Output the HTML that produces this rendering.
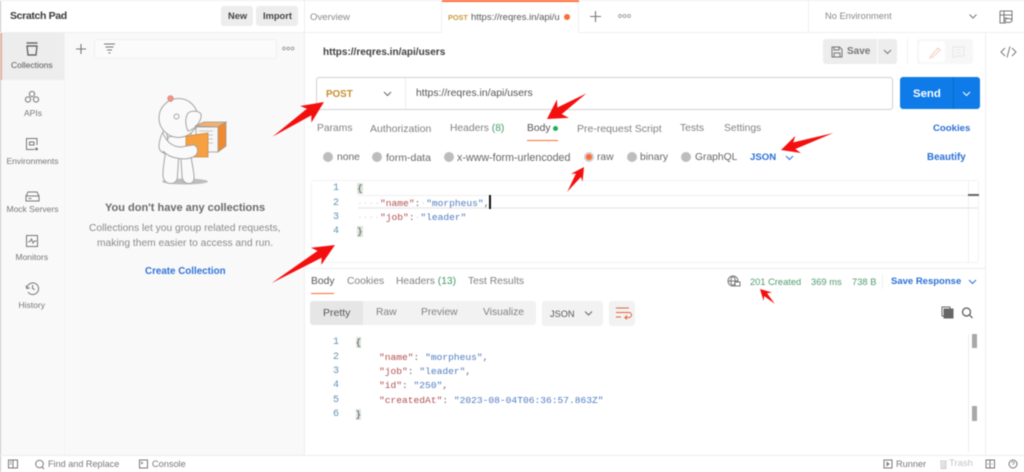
<!DOCTYPE html>
<html><head><meta charset="utf-8">
<style>
html,body{margin:0;padding:0;background:#fff}
#p{position:relative;width:1024px;height:472px;overflow:hidden;background:#fff;font-family:"Liberation Sans",sans-serif;color:#6b6b6b;filter:blur(.4px)}
.t{position:absolute;white-space:nowrap;line-height:14px;font-size:10.3px;margin-top:.8px}
.b{position:absolute}
.m{font-family:"Liberation Mono",monospace;font-size:9.6px;white-space:pre;position:absolute;line-height:14px;margin-top:.8px}
.blue{color:#2a6fd6;font-weight:bold}
.k{color:#b0504f}.s{color:#4f7cc0}.n{color:#5e93b5;text-align:right;width:20px;font-size:10px}
.br{background:#dde5dd;color:#555}
.r{position:absolute;width:10px;height:10px;border-radius:50%;background:#bdbdbd}
.nav{font-size:8.5px;color:#777;margin-top:0}
.z{margin-top:0}
svg{position:absolute;left:0;top:0}
</style></head><body><div id="p">
<!-- sidebar backgrounds -->
<div class="b" style="left:1px;top:32px;width:303px;height:423px;background:#f9f9f9"></div>
<div class="b" style="left:64px;top:32px;width:1px;height:423px;background:#f2f2f2"></div>
<div class="b" style="left:1px;top:32px;width:63px;height:48px;background:#ededed"></div>
<div class="b" style="left:1px;top:32px;width:1px;height:48px;background:#f0a080"></div>
<div class="b" style="left:0;top:0;width:1px;height:472px;background:#c4c4c4"></div>
<div class="b" style="left:0;top:0;width:1024px;height:1px;background:#f0f0f0"></div>
<div class="b" style="left:0;top:32px;width:1024px;height:1px;background:#f0f0f0"></div>
<div class="b" style="left:0;top:455px;width:1024px;height:1px;background:#ededed"></div>
<div class="b" style="left:304px;top:0;width:1px;height:455px;background:#eeeeee"></div>
<div class="b" style="left:985px;top:32px;width:1px;height:423px;background:#eeeeee"></div>
<div class="b" style="left:808px;top:0;width:1px;height:32px;background:#f0f0f0"></div>

<!-- sidebar top -->
<div class="t z" style="left:10px;top:9px;font-size:10.5px;letter-spacing:-.35px;font-weight:bold;color:#3a3a3a">Scratch Pad</div>
<div class="b" style="left:221px;top:6px;width:32px;height:20px;background:#ededed;border-radius:3px"></div>
<div class="b" style="left:256px;top:6px;width:42px;height:20px;background:#ededed;border-radius:3px"></div>
<div class="t z" style="left:228px;top:9px;font-size:9.300px;font-weight:bold;color:#444">New</div>
<div class="t z" style="left:263px;top:9px;font-size:9.300px;font-weight:bold;color:#444">Import</div>
<div class="b" style="left:94px;top:39px;width:181px;height:18px;background:#fbfbfb;border:1px solid #f0f0f0;border-radius:3px"></div>

<div class="t nav" style="left:11px;top:58px;color:#555">Collections</div>
<div class="t nav" style="left:24px;top:106px">APIs</div>
<div class="t nav" style="left:6.500px;top:154px">Environments</div>
<div class="t nav" style="left:6.500px;top:202px">Mock Servers</div>
<div class="t nav" style="left:15.500px;top:250px">Monitors</div>
<div class="t nav" style="left:18.500px;top:298px">History</div>

<div class="t" style="left:105px;top:200px;font-size:11px;font-weight:bold;color:#6b6b6b">You don't have any collections</div>
<div class="t" style="left:89px;top:221px;font-size:10.250px;color:#8a8a8a">Collections let you group related requests,</div>
<div class="t" style="left:97px;top:236px;font-size:10.250px;color:#8a8a8a">making them easier to access and run.</div>
<div class="t blue" style="left:145px;top:264px;font-size:9.800px;color:#2f73d8">Create Collection</div>

<!-- tabs -->
<div class="b" style="left:441px;top:0;width:138px;height:33px;background:#fff;border-left:1px solid #f0f0f0;border-right:1px solid #f0f0f0;box-sizing:border-box"></div>
<div class="b" style="left:442px;top:0;width:137px;height:2px;background:#ff6c37"></div>
<div class="t" style="left:310px;top:10px;font-size:9.600px;color:#8a8a8a">Overview</div>
<div class="t" style="left:448px;top:10px;font-size:7.300px;font-weight:bold;color:#c79a3c">POST</div>
<div class="b" style="left:471px;top:10px;width:89px;height:15px;overflow:hidden"><div class="t" style="left:0;top:0;color:#555;font-size:9.500px">https://reqres.in/api/users</div></div>
<div class="b" style="left:564px;top:14px;width:6px;height:6px;border-radius:50%;background:#ff6c37"></div>
<div class="t z" style="left:825px;top:9px;color:#888;font-size:9.300px">No Environment</div>

<!-- URL title -->
<div class="t" style="left:323px;top:45px;font-size:10px;font-weight:bold;color:#3f3f3f">https://reqres.in/api/users</div>

<!-- save -->
<div class="b" style="left:823px;top:39px;width:54px;height:25px;background:#ededed;border-radius:3px 0 0 3px"></div>
<div class="b" style="left:878px;top:39px;width:19px;height:25px;background:#ededed;border-radius:0 3px 3px 0"></div>
<div class="t z" style="left:847px;top:44.500px;font-size:10px;font-weight:bold;color:#777">Save</div>
<div class="b" style="left:907px;top:39px;width:1px;height:25px;background:#f0f0f0"></div>
<div class="b" style="left:917px;top:39px;width:56px;height:25px;background:#f7f7f7;border-radius:3px"></div>
<div class="b" style="left:919px;top:41px;width:26px;height:21px;background:#fff;border-radius:3px"></div>

<!-- URL bar -->
<div class="b" style="left:316px;top:77px;width:577px;height:33px;box-sizing:border-box;border:1px solid #d0d0d0;border-radius:3px;background:#fff"></div>
<div class="b" style="left:405px;top:78px;width:1px;height:31px;background:#ededed"></div>
<div class="t" style="left:326px;top:87px;font-size:9.800px;font-weight:bold;color:#c58f2e">POST</div>
<div class="t" style="left:416px;top:86px;font-size:10.400px;color:#555">https://reqres.in/api/users</div>
<div class="b" style="left:900px;top:77px;width:80px;height:32px;background:#0f7be8;border-radius:3px"></div>
<div class="b" style="left:953px;top:77px;width:1px;height:32px;background:#0b6ccd"></div>
<div class="t" style="left:913px;top:86px;font-size:11.400px;font-weight:bold;color:#fff">Send</div>

<!-- request tabs -->
<div class="t" style="left:317px;top:121px;color:#808080">Params</div>
<div class="t" style="left:370px;top:121px;color:#808080;font-size:10.500px">Authorization</div>
<div class="t" style="left:450px;top:121px;color:#808080">Headers <span style="color:#3f9a66">(8)</span></div>
<div class="t" style="left:527px;top:121px;color:#555">Body</div>
<div class="b" style="left:553px;top:126px;width:5px;height:5px;border-radius:50%;background:#1fae58"></div>
<div class="b" style="left:527px;top:140px;width:31px;height:1px;background:#ff6c37"></div>
<div class="t" style="left:577px;top:121px;color:#808080;font-size:10.500px">Pre-request Script</div>
<div class="t" style="left:680px;top:121px;color:#808080">Tests</div>
<div class="t" style="left:724px;top:121px;color:#808080">Settings</div>
<div class="t blue" style="left:933px;top:121px;font-size:9.600px">Cookies</div>

<!-- body types -->
<div class="r" style="left:323px;top:152px"></div><div class="t" style="left:337px;top:150px;color:#666">none</div>
<div class="r" style="left:372px;top:152px"></div><div class="t" style="left:386px;top:150px;color:#666;font-size:10.500px">form-data</div>
<div class="r" style="left:444px;top:152px"></div><div class="t" style="left:457px;top:150px;color:#666;font-size:10.700px">x-www-form-urlencoded</div>
<div class="r" style="left:584px;top:152px;background:#ff6c37;box-sizing:border-box;border:2px solid #cfcfcf"></div><div class="t" style="left:597px;top:150px;color:#666">raw</div>
<div class="r" style="left:627px;top:152px"></div><div class="t" style="left:640px;top:150px;color:#666">binary</div>
<div class="r" style="left:681px;top:152px"></div><div class="t" style="left:695px;top:150px;color:#666">GraphQL</div>
<div class="t blue" style="left:750px;top:150px;font-size:9.600px">JSON</div>
<div class="t blue" style="left:927px;top:150px;font-size:9.800px">Beautify</div>

<!-- editor -->
<div class="b" style="left:311px;top:180px;width:668px;height:83px;box-sizing:border-box;border:1px solid #f3f3f3;border-radius:3px"></div>
<div class="b" style="left:358px;top:195px;width:621px;height:14px;box-sizing:border-box;border-top:1px solid #eeeeee;border-bottom:2px solid #eeeeee"></div>
<div class="b" style="left:968px;top:181px;width:1px;height:82px;background:#efefef"></div>
<div class="b" style="left:968px;top:194px;width:11px;height:2px;background:#666"></div>
<div class="m n" style="left:319px;top:181.500px">1</div>
<div class="m n" style="left:319px;top:196px">2</div>
<div class="m n" style="left:319px;top:210.300px">3</div>
<div class="m n" style="left:319px;top:224.700px">4</div>
<div class="m" style="left:357px;top:181.500px"><span class="br">{</span></div>
<div class="m" style="left:357px;top:196px"><span style="color:#ddd">····</span><span class="k">"name"</span>:<span style="color:#ddd">·</span><span class="s">"morpheus"</span>,</div>
<div class="m" style="left:357px;top:210.300px"><span style="color:#ddd">····</span><span class="k">"job"</span>:<span style="color:#ddd">·</span><span class="s">"leader"</span></div>
<div class="m" style="left:357px;top:224.700px"><span class="br">}</span></div>
<div class="b" style="left:489px;top:195px;width:1.500px;height:14px;background:#111"></div>

<!-- response -->
<div class="b" style="left:304px;top:268px;width:681px;height:1px;background:#ededed"></div>
<div class="t" style="left:311px;top:274.500px;color:#555">Body</div>
<div class="b" style="left:311px;top:293px;width:23px;height:1px;background:#ff6c37"></div>
<div class="t" style="left:347px;top:274.500px;color:#808080">Cookies</div>
<div class="t" style="left:396px;top:274.500px;color:#808080">Headers <span style="color:#3f9a66">(13)</span></div>
<div class="t" style="left:468px;top:274.500px;color:#808080">Test Results</div>
<div class="t z" style="left:750px;top:274.500px;font-size:9.300px;color:#4f9b6e">201 Created</div>
<div class="t z" style="left:811px;top:274.500px;font-size:9.400px;color:#4f9b6e">369 ms</div>
<div class="t z" style="left:852px;top:274.500px;font-size:9.400px;color:#4f9b6e">738 B</div>
<div class="b" style="left:882px;top:274px;width:1px;height:15px;background:#f0f0f0"></div>
<div class="t blue" style="left:891px;top:274.500px;font-size:9.500px">Save Response</div>

<div class="b" style="left:310px;top:301px;width:226px;height:24px;background:#f2f2f2;border-radius:3px"></div>
<div class="b" style="left:310px;top:301px;width:53px;height:24px;background:#e6e6e6;border-radius:3px 0 0 3px"></div>
<div class="t" style="left:323px;top:305.500px;color:#555;font-size:10.500px">Pretty</div>
<div class="t" style="left:376px;top:305.500px;color:#808080">Raw</div>
<div class="t" style="left:421px;top:305.500px;color:#808080">Preview</div>
<div class="t" style="left:483px;top:305.500px;color:#808080">Visualize</div>
<div class="b" style="left:542px;top:301px;width:61px;height:25px;background:#f2f2f2;border-radius:3px"></div>
<div class="t z" style="left:550px;top:306.500px;color:#555;font-size:9.200px">JSON</div>
<div class="b" style="left:609px;top:301px;width:26px;height:25px;background:#f2f2f2;border-radius:3px"></div>

<div class="m n" style="left:319px;top:335.500px">1</div>
<div class="m n" style="left:319px;top:349.800px">2</div>
<div class="m n" style="left:319px;top:364.200px">3</div>
<div class="m n" style="left:319px;top:378.500px">4</div>
<div class="m n" style="left:319px;top:392.800px">5</div>
<div class="m n" style="left:319px;top:407.100px">6</div>
<div class="m" style="left:355.500px;top:335.500px"><span class="br">{</span></div>
<div class="m" style="left:379px;top:349.800px"><span class="k">"name"</span>: <span class="s">"morpheus"</span>,</div>
<div class="m" style="left:379px;top:364.200px"><span class="k">"job"</span>: <span class="s">"leader"</span>,</div>
<div class="m" style="left:379px;top:378.500px"><span class="k">"id"</span>: <span class="s">"250"</span>,</div>
<div class="m" style="left:379px;top:392.800px"><span class="k">"createdAt"</span>: <span class="s">"2023-08-04T06:36:57.863Z"</span></div>
<div class="m" style="left:355.500px;top:407.100px"><span class="br">}</span></div>
<div class="b" style="left:968px;top:334px;width:1px;height:118px;background:#ededed"></div>
<div class="b" style="left:972px;top:334px;width:5px;height:14px;background:#a8a8a8"></div>
<div class="b" style="left:972px;top:406px;width:5px;height:15px;background:#a8a8a8"></div>

<!-- status -->
<div class="t z" style="left:48px;top:457px;font-size:9.100px;color:#777">Find and Replace</div>
<div class="t z" style="left:152px;top:457px;font-size:9.200px;color:#777">Console</div>
<div class="t z" style="left:896px;top:457px;font-size:9.200px;color:#777">Runner</div>
<div class="t z" style="left:949px;top:457px;font-size:9.500px;color:#c4c4c4">Trash</div>

<!-- icons, illustration, arrows -->
<svg width="1024" height="472" viewBox="0 0 1024 472" fill="none" stroke="#777" stroke-width="1">
 <!-- collections -->
 <path d="M26.500 43h11M27 46h10l-1 9h-8z" stroke="#555" stroke-width="1.200"/>
 <!-- apis -->
 <circle cx="32" cy="94" r="2.600"/><circle cx="28" cy="99.500" r="2.600"/><circle cx="36" cy="99.500" r="2.600"/>
 <!-- env -->
 <path d="M37 145v-6.500h-10.500v11h8"/><rect x="29.500" y="142" width="4.500" height="3"/><circle cx="36.500" cy="149" r=".9" fill="#777"/>
 <!-- mock -->
 <path d="M26 196l2-4h9l2 4v5h-13zM26 196h13M28.500 198.500h3"/>
 <!-- monitors -->
 <rect x="26.500" y="235.500" width="11" height="11"/><path d="M28 242l2-.5 1.500-2.500 1.500 4 1.500-2h2"/>
 <!-- history -->
 <path d="M27 288a5.800 5.800 0 1 1 1 4M26 285.500l.8 3 3-.6M32.500 285v3.500l2.300 1.200"/>
 <!-- plus / filter / dots -->
 <path d="M81 44v10M76 49h10" stroke-width="1.100"/>
 <path d="M104 44h11M105.500 47h8M107 50h5M108.500 53h2" stroke-width=".9"/>
 <g stroke-width=".7" stroke="#888"><circle cx="284" cy="48.500" r="1.400"/><circle cx="288.300" cy="48.500" r="1.400"/><circle cx="292.600" cy="48.500" r="1.400"/></g>
 <!-- tab plus, dots, env chevron, eye icon -->
 <path d="M595.500 11v11M590 16.500h11" stroke-width="1.100"/>
 <g stroke-width=".7" stroke="#888"><circle cx="620" cy="16" r="1.500"/><circle cx="624.500" cy="16" r="1.500"/><circle cx="629" cy="16" r="1.500"/></g>
 <path d="M969.500 14.500l3.500 3.500 3.500-3.500"/>
 <path d="M1000 11h12v9M1000 11v12h6M1000 15h12M1004 11v12M1004 18h3"/><ellipse cx="1008.500" cy="20.500" rx="3.500" ry="2"/>
 <!-- code icon -->
 <path d="M1005 48l-4 4 4 4M1012 48l4 4-4 4M1010 46.500l-3 11"/>
 <!-- save -->
 <path d="M832 47h7.500l2.500 2.500v7.500h-10zM834 47v3h5v-3M834 57v-4h6v4"/>
 <path d="M884 50l3.500 3.500 3.500-3.500"/>
 <path d="M931 56l7-8 2 2-7 7-3 1z" stroke="#f7cdbd"/>
 <path d="M953 47h11v9h-8l-3 2zM956 50h5M956 53h5" stroke="#e8e8e8"/>
 <!-- url chevrons -->
 <path d="M384 92l3.500 3.500 3.500-3.500" stroke="#666"/>
 <path d="M963 92l3.500 3.500 3.500-3.500" stroke="#fff"/>
 <path d="M786 156l3.500 3.500 3.500-3.500" stroke="#2a6fd6"/>
 <path d="M969 280l3.500 3.500 3.500-3.500" stroke="#2a6fd6"/>
 <path d="M585 311.500l3.500 3.500 3.500-3.500" stroke="#666"/>
 <!-- wrap -->
 <path d="M616 308h13M616 312.500h13a2 2 0 0 1 0 5h-4l2-2M625 317.500l2 2M616 317h5" stroke="#e0643c"/>
 <!-- globe -->
 <circle cx="733" cy="281" r="5" stroke="#777"/><path d="M728 281h10M733 276c-3 3-3 7 0 10M733 276c3 3 3 7 0 10"/>
 <rect x="735" y="282" width="5" height="4" fill="#fff"/>
 <!-- copy, search -->
 <rect x="942" y="307" width="8" height="9" stroke="#666"/><rect x="944" y="309" width="9" height="9" fill="#666" stroke="#666"/>
 <circle cx="966.500" cy="312" r="4" stroke="#555" stroke-width="1.200"/><path d="M969.500 315l3 3" stroke="#555" stroke-width="1.200"/>
 <!-- status bar -->
 <rect x="8.500" y="460" width="9" height="8"/><path d="M13 460v8M10 462h1.500M10 464h1.500"/>
 <circle cx="39.500" cy="464" r="3.800"/><path d="M42 467l2 2"/>
 <rect x="139.500" y="460" width="8" height="8"/><path d="M141 462l1.500 1-1.500 1"/>
 <rect x="884" y="460" width="8" height="8"/><path d="M887 462.500l2 1.500-2 1.500z"/>
 <path d="M940 461h7M941 461.500v7h5v-7M942.800 462v6M944.500 462v6" stroke="#ccc"/>
 <rect x="986" y="460" width="8.500" height="8"/><path d="M990 460v8M987.500 464h1M991.500 464h1"/>
 <circle cx="1013" cy="464" r="4"/><path d="M1011.800 463c0-2 2.600-1.800 2.400 0-.1 1-1.200 1-1.200 2" stroke-width=".7"/>

 <!-- illustration -->
 <ellipse cx="185" cy="181.500" rx="23" ry="3" fill="#bdbdbd" stroke="none"/>
 <g stroke="#a5a5a5" stroke-width="1" fill="#fafafa">
  <path d="M166 127c-4 5-7 13-7 20 0 3 3 6 7 7l5-2-3-10z"/>
  <path d="M168 137c-1 12-5 24-5 38 0 6 4 8.500 7.500 8.500 4 0 7-2.500 7-8l1-16c.5-2 2-2 2.500 0l1 16c0 5 3 8 7 8 4 0 5.500-3 5-8-1-10-4-20-4-30 0-5 2-8 1-12z"/>
  <circle cx="178.500" cy="118" r="19.500"/>
  <path d="M188 113c5-3 11-2 13 1 1 6-5 15-13 17-3-6-3-13 0-18z"/>
  <circle cx="176.500" cy="116.500" r="2.500"/>
  <path d="M171 102l-1-3" />
 </g>
 <circle cx="170.500" cy="98.500" r="2.700" fill="#f4967a" stroke="#d88"/>
 <path d="M195 126l9-4h22l-8 5z" fill="#f5b06b" stroke="#9a9a9a" stroke-width=".8"/>
 <path d="M218 127l8-5v24l-8 6z" fill="#f08a30" stroke="#9a9a9a" stroke-width=".8"/>
 <rect x="196" y="127" width="22" height="25" fill="#f6f6f6" stroke="#9a9a9a" stroke-width=".8"/>
 <path d="M199 131h14M201 135h12M201 139h12M201 143h12" stroke="#b5b5b5" stroke-width=".8"/>
 <path d="M186 136l22-3v24h-22z" fill="#f6a042" stroke="#c98a45" stroke-width=".8"/>
 <path d="M163 133c3 8 9 14 18 14l12-2c5 0 7 9 0 12-6 3-22 3-30-6" fill="#fafafa" stroke="#a5a5a5"/>

 <!-- red arrows -->
 <g fill="#f40f0f" stroke="none">
  <polygon transform="translate(324,102) rotate(-34)" points="0,0 -22,-10 -18,-4 -62,0 -18,4 -22,10"/>
  <polygon transform="translate(547,119) rotate(147)" points="0,0 -19,-11 -15,-4 -47,0 -15,4 -19,11"/>
  <polygon transform="translate(584,167) rotate(-56)" points="0,0 -13,-7 -10,-3 -30,0 -10,3 -13,7"/>
  <polygon transform="translate(781,150) rotate(162)" points="0,0 -18,-9 -14,-3.500 -55,0 -14,3.500 -18,9"/>
  <polygon transform="translate(335,245) rotate(-31)" points="0,0 -22,-10 -18,-4 -74,0 -18,4 -22,10"/>
  <polygon transform="translate(760,289) rotate(-135)" points="0,0 -11,-6 -8,-2 -21,0 -8,2 -11,6"/>
 </g>
</svg>
</div></body></html>
